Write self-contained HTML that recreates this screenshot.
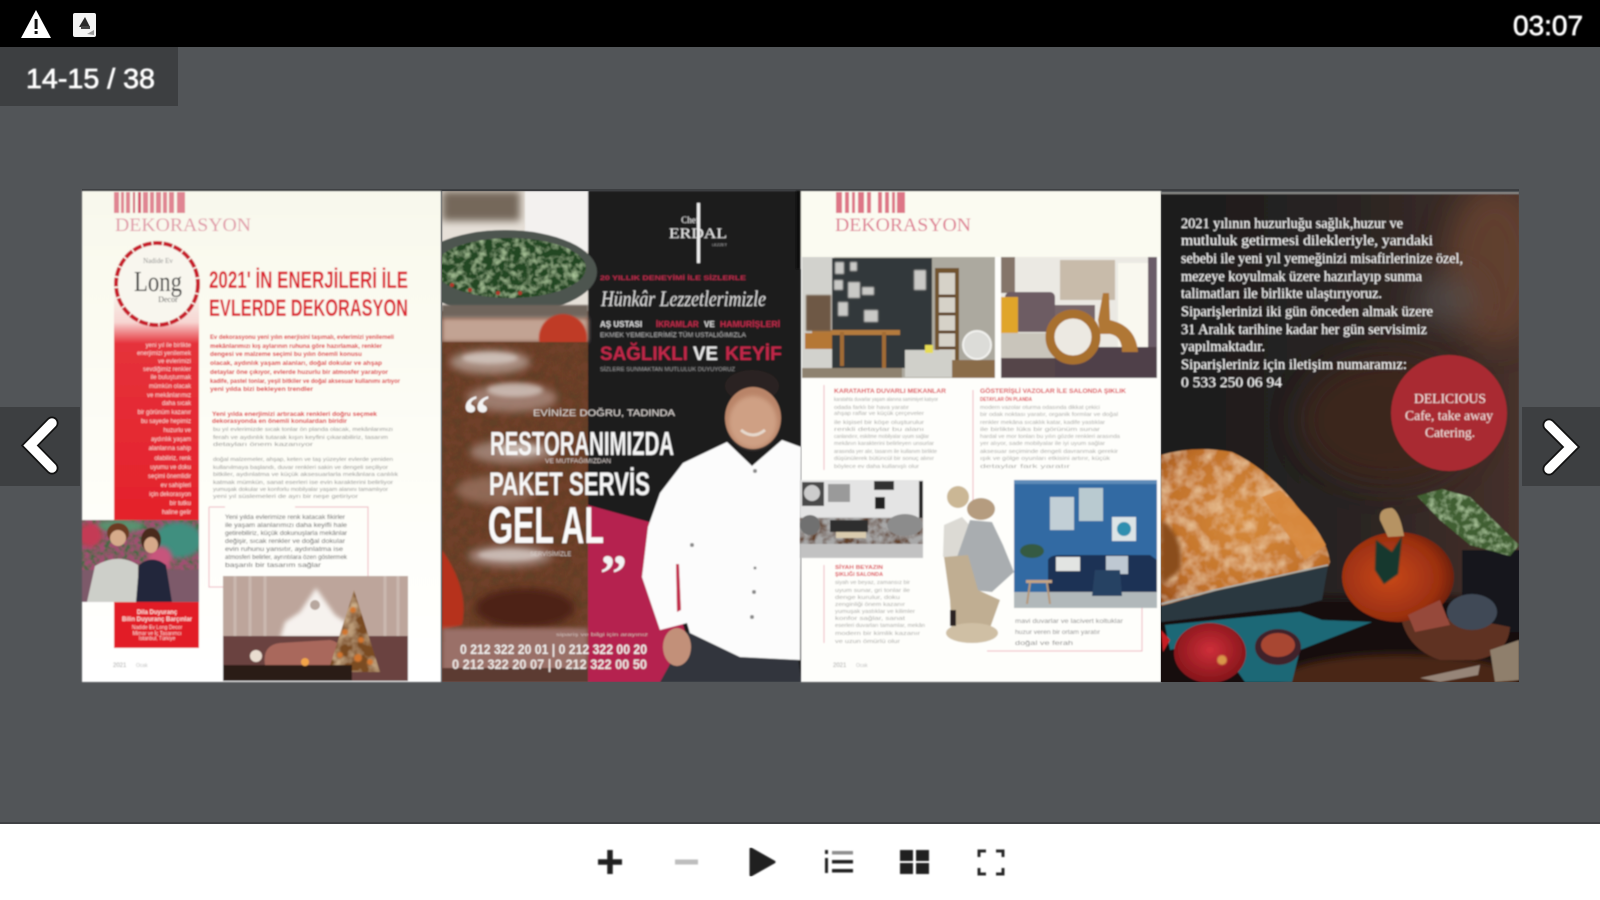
<!DOCTYPE html>
<html lang="tr"><head><meta charset="utf-8"><title>Dergi</title>
<style>
html,body{margin:0;padding:0;width:1600px;height:900px;overflow:hidden;background:#525558}
svg{display:block;position:absolute;left:0;top:0}
text{font-family:"Liberation Sans",sans-serif}
text.se,.se text{font-family:"Liberation Serif",serif}
</style></head><body>
<svg width="1600" height="900" viewBox="0 0 1600 900" xmlns="http://www.w3.org/2000/svg">
<defs>
<filter id="b1" x="-5%" y="-5%" width="110%" height="110%"><feGaussianBlur stdDeviation=".7"/></filter>
<filter id="b2" x="-20%" y="-20%" width="140%" height="140%"><feGaussianBlur stdDeviation="2"/></filter>
<filter id="b4" x="-30%" y="-30%" width="160%" height="160%"><feGaussianBlur stdDeviation="4"/></filter>
<filter id="b14" x="-60%" y="-60%" width="220%" height="220%"><feGaussianBlur stdDeviation="14"/></filter>
<filter id="texd" x="0" y="0" width="100%" height="100%"><feTurbulence type="fractalNoise" baseFrequency=".11" numOctaves="3" seed="4" result="n"/><feColorMatrix in="n" values="0 0 0 0 .12 0 0 0 0 .05 0 0 0 0 .02 2.600 0 0 0 -.95" result="m"/><feComposite in="m" in2="SourceAlpha" operator="in" result="c"/><feMerge><feMergeNode in="SourceGraphic"/><feMergeNode in="c"/></feMerge></filter>
<filter id="texl" x="0" y="0" width="100%" height="100%"><feTurbulence type="fractalNoise" baseFrequency=".07" numOctaves="3" seed="11" result="n"/><feColorMatrix in="n" values="0 0 0 0 .9 0 0 0 0 .68 0 0 0 0 .42 0 1.400 0 0 -.55" result="m"/><feComposite in="m" in2="SourceAlpha" operator="in" result="c"/><feMerge><feMergeNode in="SourceGraphic"/><feMergeNode in="c"/></feMerge></filter>
<filter id="texv" x="0" y="0" width="100%" height="100%"><feTurbulence type="fractalNoise" baseFrequency=".14" numOctaves="3" seed="5" result="n"/><feColorMatrix in="n" values="0 0 0 0 .4 0 0 0 0 .56 0 0 0 0 .32 0 2.200 0 0 -.95" result="m"/><feComposite in="m" in2="SourceAlpha" operator="in" result="c"/><feMerge><feMergeNode in="SourceGraphic"/><feMergeNode in="c"/></feMerge></filter>
<filter id="texg" x="0" y="0" width="100%" height="100%"><feTurbulence type="fractalNoise" baseFrequency=".2" numOctaves="2" seed="7" result="n"/><feColorMatrix in="n" values="0 0 0 0 .06 0 0 0 0 .14 0 0 0 0 .06 3 0 0 0 -1.100" result="m"/><feComposite in="m" in2="SourceAlpha" operator="in" result="c"/><feMerge><feMergeNode in="SourceGraphic"/><feMergeNode in="c"/></feMerge></filter>
<linearGradient id="side" x1="0" y1="0" x2="0" y2="1"><stop offset="0" stop-color="#f8f8ee"/><stop offset=".09" stop-color="#f7d5d2"/><stop offset=".15" stop-color="#e5313a"/><stop offset="1" stop-color="#e3161f"/></linearGradient>
<linearGradient id="pg" x1="0" y1="0" x2="0" y2="1"><stop offset="0" stop-color="#f8f8ec"/><stop offset=".5" stop-color="#fdfdf6"/><stop offset="1" stop-color="#ffffff"/></linearGradient>
<radialGradient id="pump" cx=".42" cy=".5" r=".65"><stop offset="0" stop-color="#c8481a"/><stop offset=".7" stop-color="#9a2f10"/><stop offset="1" stop-color="#54190b"/></radialGradient>
<radialGradient id="turk" cx=".5" cy=".45" r=".7"><stop offset="0" stop-color="#d68a3a"/><stop offset=".7" stop-color="#c2722a"/><stop offset="1" stop-color="#9c521c"/></radialGradient>
<radialGradient id="appl" cx=".5" cy=".45" r=".6"><stop offset="0" stop-color="#cf2f3a"/><stop offset="1" stop-color="#7c1216"/></radialGradient>
<linearGradient id="dk" x1="0" y1="0" x2="1" y2="0"><stop offset="0" stop-color="#1a1a1c"/><stop offset=".55" stop-color="#2a2422"/><stop offset="1" stop-color="#46302a"/></linearGradient>
<clipPath id="c4"><rect x="1161" y="192" width="358" height="490"/></clipPath>
<clipPath id="c2"><rect x="442" y="191" width="359" height="491"/></clipPath>
<clipPath id="c3a"><rect x="802" y="257" width="193" height="121"/></clipPath>
<clipPath id="c3b"><rect x="1001" y="257" width="156" height="121"/></clipPath>
<clipPath id="c3c"><rect x="800" y="480" width="123" height="78"/></clipPath>
<clipPath id="c3d"><rect x="1014" y="480" width="143" height="128"/></clipPath>
<clipPath id="c1a"><rect x="82" y="520" width="117" height="82"/></clipPath>
<clipPath id="c1b"><rect x="223" y="576" width="185" height="105"/></clipPath>
</defs>

<!-- chrome -->
<rect width="1600" height="900" fill="#525558"/>
<rect width="1600" height="47" fill="#000"/>
<rect y="47" width="178" height="59" fill="#3d3f41"/>
<rect y="407" width="80" height="79" fill="#3d3f41"/>
<rect x="1522" y="407" width="78" height="79" fill="#3d3f41"/>
<rect x="82" y="189" width="1437" height="2" fill="#3b3d40"/>
<rect y="822" width="1600" height="2" fill="#3f4144"/>
<rect y="824" width="1600" height="76" fill="#fff"/>

<!-- status icons -->
<path d="M36 10 L51 38 H21 Z" fill="#fff"/>
<rect x="34.600" y="19" width="3" height="10" fill="#111"/><rect x="34.600" y="31" width="3" height="3" fill="#111"/>
<rect x="73" y="13" width="23" height="24" rx="2" fill="#f4f4f4"/>
<path d="M85 17 L90 27 H79 Z" fill="#2a2a2a"/><rect x="81" y="26" width="9" height="3" fill="#444"/><path d="M87 34 L94 30 L94 35Z" fill="#999"/>
<g filter="url(#b1)">
<text x="1513" y="35" font-size="28" fill="#fff" stroke="#fff" stroke-width=".7">03:07</text>
<text x="26" y="88" font-size="28" fill="#fff" stroke="#fff" stroke-width=".7" textLength="129" lengthAdjust="spacingAndGlyphs">14-15 / 38</text>
</g>

<!-- nav arrows -->
<path d="M52 423 L30 445.500 L52 468" fill="none" stroke="#111" stroke-width="13" stroke-linecap="round"/>
<path d="M52 423 L30 445.500 L52 468" fill="none" stroke="#fff" stroke-width="9.500" stroke-linecap="round"/>
<path d="M1549 425 L1571 447 L1549 469" fill="none" stroke="#111" stroke-width="13" stroke-linecap="round"/>
<path d="M1549 425 L1571 447 L1549 469" fill="none" stroke="#fff" stroke-width="9.500" stroke-linecap="round"/>

<!-- PAGE 1 -->
<g filter="url(#b1)">
<rect x="82" y="191" width="359" height="491" fill="url(#pg)"/>
<g fill="#d6546c" opacity=".7">
<rect x="114" y="192" width="5" height="21"/><rect x="121" y="192" width="3" height="21"/><rect x="126" y="192" width="4" height="21"/><rect x="133" y="192" width="2" height="21" fill="#c4123a"/><rect x="138" y="192" width="3" height="21" fill="#c4123a"/><rect x="143" y="192" width="5" height="21"/><rect x="150" y="192" width="4" height="21"/><rect x="156" y="192" width="5" height="21"/><rect x="163" y="192" width="4" height="21"/><rect x="169" y="192" width="5" height="21"/><rect x="177" y="192" width="8" height="21"/>
</g>
<text class="se" x="115" y="231" font-size="19" fill="#e09aa8" textLength="136" lengthAdjust="spacingAndGlyphs">DEKORASYON</text>
<rect x="114" y="290" width="85" height="358" fill="url(#side)"/>
<circle cx="157" cy="284" r="41" fill="#f8f6ee" stroke="#c81f2c" stroke-width="4" stroke-dasharray="9 1.500"/>
<text class="se" x="158" y="263" font-size="7" fill="#888" text-anchor="middle">Nadide Ev</text>
<text class="se" x="158" y="291" font-size="29" fill="#333" text-anchor="middle" textLength="48" lengthAdjust="spacingAndGlyphs">Long</text>
<text class="se" x="168" y="302" font-size="8" fill="#555" text-anchor="middle">Decor</text>
<text x="209" y="288" font-size="24" font-weight="700" fill="#db1c2a" textLength="199" lengthAdjust="spacingAndGlyphs">2021' İN ENERJİLERİ İLE</text>
<text x="209" y="316" font-size="24" font-weight="700" fill="#db1c2a" textLength="199" lengthAdjust="spacingAndGlyphs">EVLERDE DEKORASYON</text>
<g font-size="6.500" font-weight="700" fill="#dc1f2a">
<text x="210" y="339" textLength="184" lengthAdjust="spacingAndGlyphs">Ev dekorasyonu yeni yılın enerjisini taşımalı, evlerimizi yenilemeli</text>
<text x="210" y="348" textLength="172" lengthAdjust="spacingAndGlyphs">mekânlarımızı kış aylarının ruhuna göre hazırlamak, renkler</text>
<text x="210" y="356" textLength="152" lengthAdjust="spacingAndGlyphs">dengesi ve malzeme seçimi bu yılın önemli konusu</text>
<text x="210" y="365" textLength="172" lengthAdjust="spacingAndGlyphs">olacak, aydınlık yaşam alanları, doğal dokular ve ahşap</text>
<text x="210" y="374" textLength="178" lengthAdjust="spacingAndGlyphs">detaylar öne çıkıyor, evlerde huzurlu bir atmosfer yaratıyor</text>
<text x="210" y="383" textLength="190" lengthAdjust="spacingAndGlyphs">kadife, pastel tonlar, yeşil bitkiler ve doğal aksesuar kullanımı artıyor</text>
<text x="210" y="391" textLength="103" lengthAdjust="spacingAndGlyphs">yeni yılda bizi bekleyen trendler</text>
<text x="212" y="416" textLength="165" lengthAdjust="spacingAndGlyphs">Yeni yılda enerjimizi artıracak renkleri doğru seçmek</text>
<text x="212" y="423" textLength="135" lengthAdjust="spacingAndGlyphs">dekorasyonda en önemli konulardan biridir</text>
</g>
<g font-size="5.500" fill="#8e8e8c">
<text x="213" y="431" textLength="180" lengthAdjust="spacingAndGlyphs">bu yıl evlerimizde sıcak tonlar ön planda olacak, mekânlarımızı</text>
<text x="213" y="439" textLength="175" lengthAdjust="spacingAndGlyphs">ferah ve aydınlık tutarak kışın keyfini çıkarabiliriz, tasarım</text>
<text x="213" y="446" textLength="100" lengthAdjust="spacingAndGlyphs">detayları önem kazanıyor</text>
<text x="213" y="461" textLength="180" lengthAdjust="spacingAndGlyphs">doğal malzemeler, ahşap, keten ve taş yüzeyler evlerde yeniden</text>
<text x="213" y="469" textLength="175" lengthAdjust="spacingAndGlyphs">kullanılmaya başlandı, duvar renkleri sakin ve dengeli seçiliyor</text>
<text x="213" y="476" textLength="185" lengthAdjust="spacingAndGlyphs">bitkiler, aydınlatma ve küçük aksesuarlarla mekânlara canlılık</text>
<text x="213" y="484" textLength="180" lengthAdjust="spacingAndGlyphs">katmak mümkün, sanat eserleri ise evin karakterini belirliyor</text>
<text x="213" y="491" textLength="175" lengthAdjust="spacingAndGlyphs">yumuşak dokular ve konforlu mobilyalar yaşam alanını tamamlıyor</text>
<text x="213" y="498" textLength="145" lengthAdjust="spacingAndGlyphs">yeni yıl süslemeleri de ayrı bir neşe getiriyor</text>
</g>
<g font-size="6" fill="#fbd9d6" text-anchor="end">
<text x="191" y="347">yeni yıl ile birlikte</text><text x="191" y="355">enerjimizi yenilemek</text><text x="191" y="363">ve evlerimizi</text><text x="191" y="371">sevdiğimiz renkler</text><text x="191" y="379">ile buluşturmak</text><text x="191" y="388">mümkün olacak</text><text x="191" y="397">ve mekânlarımız</text><text x="191" y="405">daha sıcak</text><text x="191" y="414">bir görünüm kazanır</text><text x="191" y="423">bu sayede hepimiz</text><text x="191" y="432">huzurlu ve</text><text x="191" y="441">aydınlık yaşam</text><text x="191" y="450">alanlarına sahip</text><text x="191" y="460">olabiliriz, renk</text><text x="191" y="469">uyumu ve doku</text><text x="191" y="478">seçimi önemlidir</text><text x="191" y="487">ev sahipleri</text><text x="191" y="496">için dekorasyon</text><text x="191" y="505">bir tutku</text><text x="191" y="514">haline gelir</text>
</g>
<path d="M295 507H368V587M209 507V587H223" fill="none" stroke="#eeb7bf" stroke-width="1"/><path d="M209 507H225" stroke="#eeb7bf"/>
<g font-size="6" fill="#555">
<text x="225" y="519" textLength="120" lengthAdjust="spacingAndGlyphs">Yeni yılda evlerimize renk katacak fikirler</text>
<text x="225" y="527" textLength="122" lengthAdjust="spacingAndGlyphs">ile yaşam alanlarımızı daha keyifli hale</text>
<text x="225" y="535" textLength="122" lengthAdjust="spacingAndGlyphs">getirebiliriz, küçük dokunuşlarla mekânlar</text>
<text x="225" y="543" textLength="120" lengthAdjust="spacingAndGlyphs">değişir, sıcak renkler ve doğal dokular</text>
<text x="225" y="551" textLength="118" lengthAdjust="spacingAndGlyphs">evin ruhunu yansıtır, aydınlatma ise</text>
<text x="225" y="559" textLength="122" lengthAdjust="spacingAndGlyphs">atmosferi belirler, ayrıntılara özen göstermek</text>
<text x="225" y="567" textLength="96" lengthAdjust="spacingAndGlyphs">başarılı bir tasarım sağlar</text>
</g>
<!-- people photo -->
<g clip-path="url(#c1a)">
<rect x="82" y="520" width="117" height="82" fill="#7d5a6a"/>
<rect x="82" y="520" width="117" height="50" fill="#a04f72" filter="url(#texg)"/>
<ellipse cx="178" cy="540" rx="24" ry="18" fill="#3f8f7f" filter="url(#b2)"/>
<ellipse cx="120" cy="526" rx="24" ry="6" fill="#58936f" filter="url(#b2)"/>
<ellipse cx="90" cy="535" rx="12" ry="12" fill="#c43a55" filter="url(#b2)"/>
<ellipse cx="160" cy="558" rx="12" ry="12" fill="#c7547c" filter="url(#b2)"/>
<ellipse cx="118" cy="533" rx="11" ry="10" fill="#6c3a22"/><ellipse cx="118" cy="538" rx="8" ry="8" fill="#d6ab8b"/>
<path d="M87 602 L95 566 Q118 552 138 565 L138 602Z" fill="#cdcfc9"/>
<ellipse cx="151" cy="540" rx="10" ry="12" fill="#4a2a1c"/><ellipse cx="151" cy="545" rx="7" ry="8" fill="#d6a98a"/>
<path d="M136 602 L139 565 Q152 554 166 565 L172 602Z" fill="#23283a"/>
</g>
<rect x="114" y="602" width="85" height="46" fill="#e21a25"/>
<g text-anchor="middle" fill="#fde2de">
<text x="157" y="614" font-size="6" font-weight="700">Dila Duyuranç</text>
<text x="157" y="621" font-size="6" font-weight="700">Bilin Duyuranç Barçınlar</text>
<text x="157" y="629" font-size="5">Nadide Ev Long Decor</text><text x="157" y="635" font-size="5">Mimar ve İç Tasarımcı</text><text x="157" y="640" font-size="5">İstanbul, Türkiye</text>
</g>
<!-- tree photo -->
<g clip-path="url(#c1b)">
<rect x="223" y="576" width="185" height="105" fill="#a98880"/>
<rect x="223" y="576" width="185" height="62" fill="#bda59b"/>
<g stroke="#d8ccc4" stroke-width="3" opacity=".5"><path d="M235 576V640M250 576V640M265 576V640M385 576V640M398 576V640"/></g>
<path d="M316 588 L335 615 L350 625 L345 638 L280 638 L285 622 L300 612Z" fill="#f6f2ee" filter="url(#b2)"/>
<circle cx="315" cy="605" r="5" fill="#b7a79e"/>
<rect x="223" y="636" width="185" height="45" fill="#6b4240"/>
<path d="M265 665 Q262 645 280 643 L330 640 Q345 642 340 665Z" fill="#a9685c"/>
<path d="M354 590 L380 672 L328 672Z" fill="#7a4c22" filter="url(#texl)"/>
<g fill="#d3762e" filter="url(#b1)"><circle cx="353" cy="610" r="3"/><circle cx="345" cy="632" r="3"/><circle cx="361" cy="640" r="3"/><circle cx="340" cy="655" r="3"/><circle cx="358" cy="658" r="4"/><circle cx="370" cy="662" r="3"/></g>
<rect x="222" y="665" width="130" height="16" fill="#2a1a18"/>
<circle cx="305" cy="662" r="4" fill="#f2a44a"/><circle cx="256" cy="656" r="6" fill="#e9ddd0"/>
</g>
<text x="113" y="667" font-size="6" fill="#999">2021</text><text x="136" y="667" font-size="5" fill="#bbb">Ocak</text>
</g>

<!-- PAGE 2 -->
<g filter="url(#b1)" clip-path="url(#c2)">
<rect x="442" y="191" width="146" height="491" fill="#6e4232"/>
<rect x="588" y="191" width="213" height="491" fill="#1b1b1d"/>
<!-- top food -->
<rect x="442" y="191" width="146" height="120" fill="#e6e0d8"/>
<rect x="442" y="191" width="78" height="30" fill="#75685a" filter="url(#b4)"/>
<rect x="525" y="191" width="63" height="60" fill="#f3f1ef"/>
<ellipse cx="505" cy="272" rx="92" ry="42" fill="#4e5550"/>
<ellipse cx="510" cy="268" rx="76" ry="30" fill="#234620" filter="url(#texv)"/>
<g fill="#b3352b"><circle cx="452" cy="285" r="2"/><circle cx="470" cy="290" r="2"/><circle cx="498" cy="293" r="2"/><circle cx="520" cy="293" r="2"/></g>
<rect x="442" y="305" width="146" height="13" fill="#6f655c" filter="url(#b1)"/>
<rect x="442" y="318" width="146" height="24" fill="#c2a393" filter="url(#b2)"/>
<circle cx="563" cy="338" r="24" fill="#bf3b26" filter="url(#b1)"/>
<!-- meat -->
<rect x="442" y="342" width="146" height="300" fill="#6f3f2c" filter="url(#texd)"/>
<g filter="url(#b4)">
<ellipse cx="490" cy="362" rx="40" ry="12" fill="#b8a096" opacity=".8"/>
<ellipse cx="512" cy="398" rx="45" ry="14" fill="#ab8c80" opacity=".8"/>
<ellipse cx="512" cy="452" rx="42" ry="12" fill="#a98d82" opacity=".8"/>
<ellipse cx="496" cy="490" rx="40" ry="14" fill="#a07a68" opacity=".7"/>
<ellipse cx="510" cy="556" rx="42" ry="11" fill="#a98d85" opacity=".85"/>
<ellipse cx="525" cy="608" rx="50" ry="20" fill="#4d2417"/>
</g>
<g fill="#eae6e2" opacity=".55" filter="url(#b2)"><ellipse cx="490" cy="358" rx="28" ry="6"/><ellipse cx="515" cy="390" rx="28" ry="7"/><ellipse cx="520" cy="450" rx="22" ry="6"/><ellipse cx="510" cy="555" rx="32" ry="6"/></g>
<path d="M442 550 Q470 590 462 625 L442 630Z" fill="#b6331f" filter="url(#b1)"/>
<rect x="442" y="628" width="146" height="54" fill="#9a7068" filter="url(#b2)"/>
<rect x="442" y="668" width="146" height="14" fill="#5b3a30"/>
<!-- crimson -->
<path d="M588 505 L653 523 L700 682 L588 682Z" fill="#b5234f"/>
<!-- logo -->
<rect x="697" y="203" width="3" height="60" fill="#f0f0f0"/>
<text class="se" x="690" y="223" font-size="9" fill="#eee" text-anchor="middle">Chef</text>
<text class="se" x="698" y="238" font-size="15" fill="#eee" text-anchor="middle" textLength="58" lengthAdjust="spacingAndGlyphs">ERDAL</text>
<text x="712" y="246" font-size="4" fill="#aaa">LEZZET</text>
<text x="600" y="280" font-size="6" font-weight="700" fill="#b92b4c" textLength="146" lengthAdjust="spacingAndGlyphs">20 YILLIK DENEYİMİ İLE SİZLERLE</text>
<text class="se" x="601" y="306" font-size="22" font-style="italic" fill="#dcdcdc" textLength="165" lengthAdjust="spacingAndGlyphs">Hünkâr Lezzetlerimizle</text>
<text x="600" y="327" font-size="8" font-weight="700" fill="#ddd">AŞ USTASI</text>
<text x="656" y="327" font-size="8" font-weight="700" fill="#c22a4c">İKRAMLAR</text><text x="704" y="327" font-size="8" font-weight="700" fill="#ddd">VE</text><text x="720" y="327" font-size="8" font-weight="700" fill="#c22a4c" textLength="60" lengthAdjust="spacingAndGlyphs">HAMURİŞLERİ</text>
<text x="600" y="337" font-size="6" fill="#b0b0b0" textLength="146" lengthAdjust="spacingAndGlyphs">EKMEK YEMEKLERİMİZ TÜM USTALIĞIMIZLA</text>
<text x="600" y="360" font-size="19" font-weight="700" fill="#c2274a" textLength="88" lengthAdjust="spacingAndGlyphs">SAĞLIKLI</text>
<text x="693" y="360" font-size="19" font-weight="700" fill="#e8e8e8" textLength="25" lengthAdjust="spacingAndGlyphs">VE</text>
<text x="725" y="360" font-size="19" font-weight="700" fill="#c2274a" textLength="57" lengthAdjust="spacingAndGlyphs">KEYİF</text>
<text x="600" y="371" font-size="5" fill="#999" textLength="135" lengthAdjust="spacingAndGlyphs">SİZLERE SUNMAKTAN MUTLULUK DUYUYORUZ</text>
<!-- person -->
<path d="M660 682 L690 628 L797 650 L801 682Z" fill="#33363c"/>
<ellipse cx="677" cy="647" rx="14" ry="19" fill="#c29079"/>
<ellipse cx="752" cy="386" rx="27" ry="16" fill="#2b2220"/>
<ellipse cx="753" cy="418" rx="28" ry="31" fill="#b98468"/>
<ellipse cx="753" cy="422" rx="24" ry="26" fill="#cfa084" filter="url(#b2)"/>
<path d="M741 430 Q753 440 765 430" stroke="#e6d8cc" stroke-width="3" fill="none"/>
<path d="M727 442 L683 463 L660 493 L648 527 L642 577 L660 630 L687 623 L690 633 L740 657 L800 660 L801 447 L782 440 L752 466Z" fill="#fcfcfc"/>
<path d="M676 564 L679 564 L681 610 L677 612Z" fill="#c22a4c"/>
<g fill="#888"><circle cx="755" cy="471" r="2"/><circle cx="755" cy="568" r="1.500"/><circle cx="754" cy="592" r="2"/><circle cx="752" cy="617" r="2"/><circle cx="692" cy="545" r="2"/></g>
<!-- overlay headlines -->
<text x="463" y="432" font-size="54" font-weight="700" fill="#f3f3f3" style="font-family:'Liberation Serif',serif">“</text>
<text x="533" y="416" font-size="9" fill="#e2dcd8" textLength="142" lengthAdjust="spacingAndGlyphs">EVİNİZE DOĞRU, TADINDA</text>
<text x="490" y="455" font-size="33" font-weight="700" fill="#f6f6f6" textLength="184" lengthAdjust="spacingAndGlyphs">RESTORANIMIZDA</text>
<text x="545" y="463" font-size="6" fill="#d8cfcb" textLength="66" lengthAdjust="spacingAndGlyphs">VE MUTFAĞIMIZDAN</text>
<text x="489" y="495" font-size="32" font-weight="700" fill="#f6f6f6" textLength="161" lengthAdjust="spacingAndGlyphs">PAKET SERVİS</text>
<text x="488" y="543" font-size="52" font-weight="700" fill="#fafafa" textLength="116" lengthAdjust="spacingAndGlyphs">GEL AL</text>
<text x="530" y="556" font-size="6" fill="#d8cfcb">SERVİSİMİZLE</text>
<text x="600" y="592" font-size="54" font-weight="700" fill="#f3f3f3" style="font-family:'Liberation Serif',serif">”</text>
<text x="556" y="636" font-size="4.500" fill="#d0c0bc" textLength="92" lengthAdjust="spacingAndGlyphs">sipariş ve bilgi için arayınız</text>
<text x="460" y="654" font-size="14" font-weight="700" fill="#f2f0ee" textLength="187" lengthAdjust="spacingAndGlyphs">0 212 322 20 01 | 0 212 322 00 20</text>
<text x="452" y="669" font-size="14" font-weight="700" fill="#efe9e6" textLength="195" lengthAdjust="spacingAndGlyphs">0 212 322 20 07 | 0 212 322 00 50</text>
</g>

<!-- PAGE 3 -->
<g filter="url(#b1)">
<rect x="801" y="191" width="360" height="491" fill="#fefefb"/>
<rect x="801" y="191" width="360" height="66" fill="#fbfbf1"/>
<g fill="#d6546c" opacity=".8">
<rect x="836" y="192" width="6" height="21"/><rect x="845" y="192" width="4" height="21"/><rect x="852" y="192" width="3" height="21"/><rect x="858" y="192" width="6" height="21"/><rect x="867" y="192" width="4" height="21"/><rect x="878" y="192" width="4" height="21"/><rect x="885" y="192" width="4" height="21"/><rect x="892" y="192" width="3" height="21"/><rect x="897" y="192" width="8" height="21"/>
</g>
<text class="se" x="835" y="231" font-size="19" fill="#dd7a90" textLength="136" lengthAdjust="spacingAndGlyphs">DEKORASYON</text>
<!-- photo A -->
<g clip-path="url(#c3a)">
<rect x="802" y="257" width="193" height="121" fill="#aca99f"/>
<rect x="802" y="257" width="32" height="121" fill="#d2d2cd"/>
<rect x="832" y="258" width="100" height="110" fill="#33373a"/>
<g fill="#c9c9c6" filter="url(#b1)"><rect x="835" y="262" width="9" height="12"/><rect x="850" y="262" width="7" height="9"/><rect x="834" y="280" width="9" height="10"/><rect x="848" y="282" width="12" height="16"/><rect x="862" y="287" width="12" height="8"/><rect x="914" y="270" width="12" height="20"/><rect x="838" y="302" width="10" height="14"/><rect x="864" y="310" width="14" height="12"/></g>
<rect x="935" y="268" width="24" height="100" fill="#71532f"/>
<rect x="939" y="273" width="16" height="90" fill="#d6d2c8"/>
<path d="M939 296h16M939 314h16M939 332h16M939 348h16" stroke="#5e4325" stroke-width="3"/>
<rect x="812" y="330" width="88" height="5" fill="#b47a3c"/><rect x="840" y="332" width="4" height="34" fill="#a26c34"/><rect x="882" y="332" width="4" height="36" fill="#a26c34"/>
<rect x="805" y="333" width="27" height="16" fill="#b57736"/>
<rect x="806" y="295" width="25" height="36" fill="#6e5844" filter="url(#b1)"/>
<circle cx="977" cy="345" r="14" fill="#dcdcd8" stroke="#f2f2ef" stroke-width="2"/>
<rect x="905" y="350" width="47" height="27" fill="#d0d0ca"/><rect x="925" y="345" width="8" height="8" fill="#e7dc52"/>
<rect x="802" y="368" width="100" height="10" fill="#8e8270"/>
<rect x="952" y="360" width="43" height="18" fill="#8a6c4a"/>
</g>
<!-- photo B -->
<g clip-path="url(#c3b)">
<rect x="1001" y="257" width="156" height="121" fill="#ebe9e3"/>
<rect x="1060" y="260" width="55" height="40" fill="#c8bbaa"/>
<rect x="1118" y="263" width="30" height="85" fill="#f9f8ef"/>
<rect x="1148" y="257" width="9" height="121" fill="#6a5c68"/>
<rect x="1001" y="257" width="14" height="36" fill="#85756a"/>
<rect x="1005" y="292" width="50" height="40" rx="5" fill="#6d5b63"/>
<rect x="1055" y="305" width="40" height="30" fill="#77666a"/>
<rect x="1001" y="297" width="17" height="38" fill="#e0a52a"/>
<rect x="1001" y="333" width="58" height="27" fill="#c9c5bb"/>
<rect x="1001" y="358" width="156" height="20" fill="#55454a"/>
<rect x="1055" y="347" width="102" height="31" fill="#50404a"/>
<circle cx="1073" cy="337" r="23" fill="#ece9e2" stroke="#a8702f" stroke-width="9"/>
<path d="M1103 293 L1109 293 L1110 320 Q1136 326 1138 352 L1122 352 Q1122 336 1110 334 L1100 334 L1098 320Z" fill="#b07734"/>
</g>
<!-- texts -->
<g stroke="#eeb4bf" stroke-width="1" fill="none"><path d="M824 385V470"/><path d="M973 390V505"/><path d="M824 565V643"/><path d="M1142 608V651H987"/></g>
<g font-size="6" font-weight="700" fill="#dc3a46">
<text x="834" y="393" textLength="112" lengthAdjust="spacingAndGlyphs">KARATAHTA DUVARLI MEKANLAR</text>
<text x="980" y="393" textLength="146" lengthAdjust="spacingAndGlyphs">GÖSTERİŞLİ VAZOLAR İLE SALONDA ŞIKLIK</text>
<text x="980" y="401" font-size="5" textLength="52" lengthAdjust="spacingAndGlyphs">DETAYLAR ÖN PLANDA</text>
<text x="835" y="569" font-size="5" textLength="48" lengthAdjust="spacingAndGlyphs">SİYAH BEYAZIN</text>
<text x="835" y="576" font-size="5.500" textLength="48" lengthAdjust="spacingAndGlyphs">ŞIKLIĞI SALONDA</text>
</g>
<g font-size="5" fill="#a6a6a2">
<text x="834" y="401" textLength="104" lengthAdjust="spacingAndGlyphs">karatahta duvarlar yaşam alanına samimiyet katıyor</text>
<text x="834" y="409" textLength="75" lengthAdjust="spacingAndGlyphs">odada farklı bir hava yaratır</text>
<text x="834" y="415" textLength="90" lengthAdjust="spacingAndGlyphs">ahşap raflar ve küçük çerçeveler</text>
<text x="834" y="424" textLength="90" lengthAdjust="spacingAndGlyphs">ile kişisel bir köşe oluşturulur</text>
<text x="834" y="431" textLength="90" lengthAdjust="spacingAndGlyphs">renkli detaylar bu alanı</text>
<text x="834" y="438" textLength="95" lengthAdjust="spacingAndGlyphs">canlandırır, eskitme mobilyalar uyum sağlar</text>
<text x="834" y="445" textLength="100" lengthAdjust="spacingAndGlyphs">mekânın karakterini belirleyen unsurlar</text>
<text x="834" y="453" textLength="103" lengthAdjust="spacingAndGlyphs">arasında yer alır, tasarım ile kullanım birlikte</text>
<text x="834" y="460" textLength="100" lengthAdjust="spacingAndGlyphs">düşünülerek bütüncül bir sonuç alınır</text>
<text x="834" y="468" textLength="85" lengthAdjust="spacingAndGlyphs">böylece ev daha kullanışlı olur</text>
<text x="980" y="409" textLength="120" lengthAdjust="spacingAndGlyphs">modern vazolar oturma odasında dikkat çekici</text>
<text x="980" y="416" textLength="138" lengthAdjust="spacingAndGlyphs">bir odak noktası yaratır, organik formlar ve doğal</text>
<text x="980" y="424" textLength="125" lengthAdjust="spacingAndGlyphs">renkler mekâna sıcaklık katar, kadife yastıklar</text>
<text x="980" y="431" textLength="120" lengthAdjust="spacingAndGlyphs">ile birlikte lüks bir görünüm sunar</text>
<text x="980" y="438" textLength="140" lengthAdjust="spacingAndGlyphs">hardal ve mor tonları bu yılın gözde renkleri arasında</text>
<text x="980" y="445" textLength="125" lengthAdjust="spacingAndGlyphs">yer alıyor, sade mobilyalar ile iyi uyum sağlar</text>
<text x="980" y="453" textLength="138" lengthAdjust="spacingAndGlyphs">aksesuar seçiminde dengeli davranmak gerekir</text>
<text x="980" y="460" textLength="130" lengthAdjust="spacingAndGlyphs">ışık ve gölge oyunları etkisini artırır, küçük</text>
<text x="980" y="468" textLength="90" lengthAdjust="spacingAndGlyphs">detaylar fark yaratır</text>
<text x="835" y="584" textLength="75" lengthAdjust="spacingAndGlyphs">siyah ve beyaz, zamansız bir</text>
<text x="835" y="592" textLength="75" lengthAdjust="spacingAndGlyphs">uyum sunar, gri tonlar ile</text>
<text x="835" y="599" textLength="65" lengthAdjust="spacingAndGlyphs">denge kurulur, doku</text>
<text x="835" y="606" textLength="70" lengthAdjust="spacingAndGlyphs">zenginliği önem kazanır</text>
<text x="835" y="613" textLength="80" lengthAdjust="spacingAndGlyphs">yumuşak yastıklar ve kilimler</text>
<text x="835" y="620" textLength="70" lengthAdjust="spacingAndGlyphs">konfor sağlar, sanat</text>
<text x="835" y="627" textLength="90" lengthAdjust="spacingAndGlyphs">eserleri duvarları tamamlar, mekân</text>
<text x="835" y="635" textLength="85" lengthAdjust="spacingAndGlyphs">modern bir kimlik kazanır</text>
<text x="835" y="643" textLength="65" lengthAdjust="spacingAndGlyphs">ve uzun ömürlü olur</text>
<text x="1015" y="623" font-size="6.500" fill="#888" textLength="108" lengthAdjust="spacingAndGlyphs">mavi duvarlar ve lacivert koltuklar</text>
<text x="1015" y="634" font-size="6.500" fill="#888" textLength="85" lengthAdjust="spacingAndGlyphs">huzur veren bir ortam yaratır</text>
<text x="1015" y="645" font-size="6.500" fill="#888" textLength="58" lengthAdjust="spacingAndGlyphs">doğal ve ferah</text>
</g>
<!-- bw photo -->
<g clip-path="url(#c3c)">
<rect x="800" y="480" width="123" height="78" fill="#cfcfcf"/>
<rect x="800" y="480" width="123" height="37" fill="#e4e4e4"/>
<rect x="802" y="482" width="22" height="24" fill="#4a4a4a"/><circle cx="812" cy="493" r="8" fill="#ccc"/>
<rect x="828" y="484" width="22" height="18" fill="#9a9a9a"/>
<rect x="874" y="481" width="20" height="9" fill="#333"/><rect x="875" y="497" width="10" height="12" fill="#222"/>
<rect x="919" y="481" width="4" height="50" fill="#222"/>
<rect x="800" y="518" width="123" height="40" fill="#a8a8a8" filter="url(#texd)"/>
<rect x="830" y="520" width="38" height="12" fill="#2e2e2e"/><rect x="836" y="532" width="30" height="6" fill="#d9cbae"/>
<ellipse cx="905" cy="525" rx="18" ry="11" fill="#8c8c8c"/><ellipse cx="810" cy="525" rx="10" ry="10" fill="#707070"/>
<rect x="800" y="544" width="123" height="14" fill="#c2c2c2"/>
</g>
<!-- blue photo -->
<g clip-path="url(#c3d)">
<rect x="1014" y="480" width="143" height="128" fill="#316aa3"/>
<rect x="1014" y="480" width="143" height="4" fill="#5d8ab8"/>
<rect x="1050" y="497" width="24" height="33" fill="#c2cfd6"/><rect x="1079" y="488" width="24" height="33" fill="#b9cad0"/><rect x="1112" y="517" width="24" height="24" fill="#dce4e6"/>
<circle cx="1124" cy="529" r="7" fill="#2f8fb0"/>
<rect x="1014" y="592" width="143" height="16" fill="#b1b8ba"/>
<path d="M1048 560 Q1050 555 1060 555 H1150 L1157 560 V592 H1048Z" fill="#1e3354"/>
<rect x="1056" y="557" width="24" height="14" fill="#e2e4e2"/><rect x="1106" y="556" width="22" height="18" fill="#bec8d2"/>
<path d="M1095 570 H1120 L1122 596 H1092Z" fill="#264264"/>
<rect x="1026" y="580" width="26" height="3" fill="#c4a585"/><path d="M1030 583 L1027 604M1047 583 L1050 604" stroke="#b5987a" stroke-width="2"/>
<ellipse cx="1032" cy="551" rx="12" ry="7" fill="#345a42"/>
</g>
<!-- figurine -->
<ellipse cx="958" cy="497" rx="11" ry="11" fill="#cbb795"/>
<ellipse cx="981" cy="509" rx="14" ry="11" fill="#b59c7f"/>
<path d="M943 557 L944 525 L962 517 L974 530 L974 555Z" fill="#dcdad4"/>
<path d="M970 520 L992 522 L1003 545 L1014 572 L992 592 L970 590 L956 560Z" fill="#a9adb0"/>
<path d="M944 557 L968 555 L978 590 L1000 600 L990 628 L978 640 L952 636 L950 600Z" fill="#c0ae92"/>
<ellipse cx="972" cy="633" rx="26" ry="10" fill="#cfbfa4"/>
<rect x="950" y="610" width="6" height="16" fill="#2b2320"/>
<text x="833" y="667" font-size="6" fill="#999">2021</text><text x="856" y="667" font-size="5" fill="#bbb">Ocak</text>
<rect x="796" y="191" width="5" height="78" fill="#111"/>
</g>

<!-- PAGE 4 -->
<g filter="url(#b1)" clip-path="url(#c4)">
<rect x="1161" y="192" width="358" height="490" fill="url(#dk)"/>
<ellipse cx="1495" cy="265" rx="50" ry="80" fill="#6a4530" filter="url(#b14)" opacity=".75"/>
<ellipse cx="1390" cy="420" rx="90" ry="65" fill="#3e261d" filter="url(#b14)" opacity=".9"/>
<ellipse cx="1445" cy="300" rx="32" ry="24" fill="#565454" filter="url(#b14)" opacity=".6"/>
<rect x="1161" y="192" width="358" height="2" fill="#8a8a88"/>
<rect x="1130" y="598" width="420" height="120" fill="#141111" filter="url(#b4)"/>
<ellipse cx="1400" cy="680" rx="120" ry="26" fill="#4a2618" filter="url(#b4)"/>
<!-- turkey -->
<path d="M1161 455 Q1195 445 1232 452 Q1270 470 1300 510 Q1326 535 1330 562 Q1322 585 1280 590 L1215 592 L1161 606 Z" fill="url(#turk)" filter="url(#texl)"/>
<path d="M1262 497 L1280 490 Q1312 520 1326 545 L1305 560Z" fill="#d88a3e" opacity=".9"/>
<path d="M1161 520 Q1185 535 1180 570 L1161 585Z" fill="#8a4d1c" filter="url(#b2)"/>
<!-- pan -->
<path d="M1161 606 L1215 591 L1328 566 L1322 600 L1300 606 L1161 622Z" fill="#2a3840"/>
<path d="M1161 604 L1215 590 L1328 565" stroke="#aab0ae" stroke-width="1.500" fill="none"/>
<!-- cloth -->
<path d="M1165 625 L1300 612 L1322 620 L1372 622 L1300 650 L1292 682 L1245 682 L1215 640 L1170 650Z" fill="#1a6776"/>
<!-- apple -->
<ellipse cx="1210" cy="653" rx="36" ry="30" fill="url(#appl)"/>
<circle cx="1222" cy="660" r="5" fill="#d89648" filter="url(#b1)"/>
<path d="M1161 630 L1170 640 L1163 652Z" fill="#c41c24"/>
<!-- fig -->
<ellipse cx="1278" cy="647" rx="23" ry="18" fill="#40222c"/>
<ellipse cx="1278" cy="645" rx="17" ry="12" fill="#a84633"/>
<!-- pumpkin -->
<ellipse cx="1398" cy="577" rx="56" ry="45" fill="url(#pump)"/>
<path d="M1376 540 L1392 552 L1402 536 L1398 574 L1384 584 L1375 570Z" fill="#15382e" filter="url(#b1)"/>
<path d="M1380 520 Q1378 508 1392 508 Q1400 512 1404 536 L1388 537Z" fill="#b69364"/>
<!-- pot and greens -->
<rect x="1462" y="550" width="58" height="82" fill="#12171a"/>
<path d="M1417 496 L1442 489 L1470 497 L1519 545 L1510 556 L1470 545 L1440 520Z" fill="#3f5f30" filter="url(#texv)"/>
<!-- bowl -->
<path d="M1402 622 Q1440 612 1510 627 Q1508 655 1475 660 L1440 660 Q1410 650 1402 622Z" fill="#5e3022"/>
<ellipse cx="1472" cy="612" rx="25" ry="18" fill="#3f4a56"/>
<path d="M1408 615 L1440 600 L1450 625 L1415 632Z" fill="#96493b"/>
<path d="M1490 650 L1519 640 V680 L1495 682Z" fill="#8f7f6c"/>
<path d="M1420 678 L1480 665 L1478 675 L1440 682Z" fill="#c9c4ba" opacity=".6"/>
<!-- text -->
<g class="se" font-size="15" fill="#fff">
<text x="1181" y="228" textLength="222" lengthAdjust="spacingAndGlyphs">2021 yılının huzurluğu sağlık,huzur ve</text>
<text x="1181" y="245" textLength="252" lengthAdjust="spacingAndGlyphs">mutluluk getirmesi dilekleriyle, yarıdaki</text>
<text x="1181" y="263" textLength="282" lengthAdjust="spacingAndGlyphs">sebebi ile yeni yıl yemeğinizi misafirlerinize özel,</text>
<text x="1181" y="281" textLength="241" lengthAdjust="spacingAndGlyphs">mezeye koyulmak üzere hazırlayıp sunma</text>
<text x="1181" y="298" textLength="201" lengthAdjust="spacingAndGlyphs">talimatları ile birlikte ulaştırıyoruz.</text>
<text x="1181" y="316" textLength="252" lengthAdjust="spacingAndGlyphs">Siparişlerinizi iki gün önceden almak üzere</text>
<text x="1181" y="334" textLength="246" lengthAdjust="spacingAndGlyphs">31 Aralık tarihine kadar her gün servisimiz</text>
<text x="1181" y="351" textLength="84" lengthAdjust="spacingAndGlyphs">yapılmaktadır.</text>
<text x="1181" y="369" textLength="226" lengthAdjust="spacingAndGlyphs">Siparişleriniz için iletişim numaramız:</text>
<text x="1181" y="387" textLength="101" lengthAdjust="spacingAndGlyphs">0 533 250 06 94</text>
</g>
<circle cx="1449" cy="413" r="58" fill="#a92a31"/>
<g class="se" font-size="14" fill="#f5e4e2" text-anchor="middle">
<text x="1450" y="403" textLength="72" lengthAdjust="spacingAndGlyphs">DELICIOUS</text>
<text x="1449" y="420" textLength="88" lengthAdjust="spacingAndGlyphs">Cafe, take away</text>
<text x="1450" y="437" textLength="50" lengthAdjust="spacingAndGlyphs">Catering.</text>
</g>
</g>

<!-- toolbar icons -->
<g filter="url(#b1)" opacity=".98">
<path d="M610 850V874M598 862H622" stroke="#1a1a1a" stroke-width="5.500" fill="none"/>
<path d="M675 862H698" stroke="#bdbdbd" stroke-width="5" fill="none"/>
<path d="M751 849 L774 862 L751 875Z" fill="#1a1a1a" stroke="#1a1a1a" stroke-width="3" stroke-linejoin="round"/>
<g fill="#1a1a1a">
<rect x="825" y="850" width="3" height="4"/><rect x="825" y="858" width="3" height="15"/>
<rect x="832" y="851" width="21" height="3.500" fill="#8c8c8c"/><rect x="832" y="860" width="21" height="3.500"/><rect x="832" y="869" width="21" height="3.500"/>
<rect x="900" y="850" width="13" height="11"/><rect x="916" y="850" width="13" height="11"/><rect x="900" y="863" width="13" height="11"/><rect x="916" y="863" width="13" height="11"/>
</g>
<path d="M979 857V851H986M996 851H1003V857M1003 868V874H996M986 874H979V868" fill="none" stroke="#222" stroke-width="3"/>
</g>
</svg>
</body></html>
